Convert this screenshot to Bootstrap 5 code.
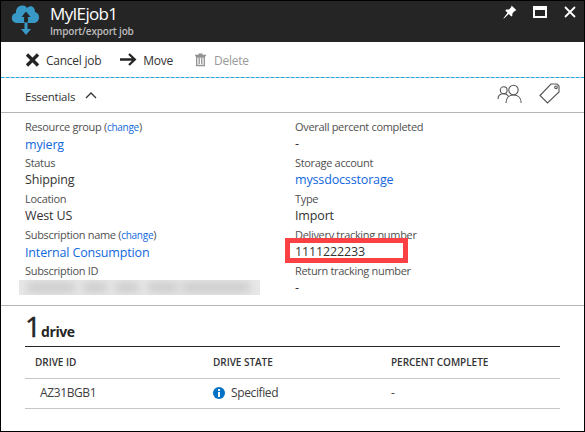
<!DOCTYPE html>
<html lang="en">
<head>
<meta charset="utf-8">
<meta name="viewport" content="width=device-width, initial-scale=1">
<title>MyIEjob1</title>
<link href="https://cdn.jsdelivr.net/npm/bootstrap@5.3.0/dist/css/bootstrap.min.css" rel="stylesheet">
<style>
body{font-family:"Open Sans","Noto Sans",sans-serif;color:#333;font-size:12px;line-height:18px;overflow:hidden}
svg{display:block;flex:none}
a{color:#1068dc;text-decoration:none}
.blade{height:432px;border:1px solid #000;background:#fff}
.blade-head{height:41px;background:#252525;color:#fff;padding:0 7px 0 10px}
.blade-name{padding-left:10px}
.blade-title{font-size:17px;line-height:22px;letter-spacing:-.65px;font-weight:400;margin-top:2px}
.blade-sub{font-size:10px;line-height:13px;color:#bdbdbd;font-weight:600;letter-spacing:-.18px}
.window-tools{padding-top:4px}
.maximize{margin-top:1px}
.commands{height:36px;padding-left:24px;border-bottom:1px dashed #0fb0e4;background:linear-gradient(#b9c0c3,#b9c0c3) left bottom/100% 1px no-repeat border-box}
.command{font-size:12px;letter-spacing:-.25px;color:#333;margin-left:6px;padding-top:2px}
.command.off{color:#999}
.gap-move{margin-left:19px}
.gap-delete{margin-left:22px}
.ess-bar{height:35px;padding:0 24px 0 24px;border-bottom:1px solid #b5b5b5}
.ess-bar .people,.ess-bar .tag{margin-bottom:3px}
.ess-title{font-size:11.5px;letter-spacing:-.25px;padding-top:3px}
.ess-body{height:193px;padding:5px 24px 0;border-bottom:1px solid #b5b5b5}
.ess-col{width:270px;flex:none}
.pair{height:36px}
.key{font-size:11px;line-height:17px;color:#505050;letter-spacing:-.32px}
.key .chg{font-size:10px;letter-spacing:-.27px}
.val{font-size:12.5px;line-height:17px;letter-spacing:-.15px}
.marker{left:-10px;top:-5px;width:123px;height:25px;border:5px solid #fc4144}
.redacted{margin:1px 0 0 -6px;width:241px;height:15px;background:#e8e8e8}
.redacted i{display:block;position:absolute;top:2px;height:11px;background:#cdcdcd;filter:blur(4px)}
.drives{padding:0 24px}
.drives-title{height:41px;border-bottom:1px solid #252525;color:#252525}
.count{font-size:28px;line-height:40px;letter-spacing:-3px;-webkit-text-stroke:.5px #252525}
.noun{font-size:14px;font-weight:700;letter-spacing:-.4px;margin-left:3px}
.grid-table{table-layout:fixed;width:535px}
.grid-table th,.grid-table td{padding:0 10px;border-bottom:1px solid #c6c6c6;box-shadow:none;vertical-align:middle}
.grid-table th{height:31px;line-height:16px;font-size:10px;font-weight:600;color:#333;letter-spacing:-.04px}
.grid-table td{height:30px;font-size:12px;color:#404040;letter-spacing:-.38px}
.grid-table td:first-child{padding-left:15px}
.state-name{margin-left:6px}
</style>
</head>
<body>
<main class="blade">
  <header class="blade-head d-flex">
    <svg width="29" height="36" viewBox="0 0 29 36"><path d="M7 22C3 22 .8 20 .8 17 .8 14 2.600 12.200 5 12 4.500 7 8 4 12 4.500 14 4.700 15 5.500 16 7 20 3.500 24 6 24 11 26.500 11.500 28 13.500 28 16.500 28 20 25.500 22 22 22Z" fill="#3999c6"/><path d="M15 10.500l4.500 5.500h-3v5h-3v-5h-3Z" fill="#252525"/><path d="M13 20.500v-4h4v4h-.5v7.500H20L15 34l-5-6h3.500v-7.500Z" fill="#252525"/><path d="M13.500 21.500h3V28h3.500l-5 6-5-6h3.500Z" fill="#3999c6"/></svg>
    <div class="blade-name flex-grow-1">
      <h1 class="blade-title mb-0">MyIEjob1</h1>
      <div class="blade-sub">Import/export job</div>
    </div>
    <div class="window-tools d-flex">
      <svg width="14" height="14" viewBox="0 0 14 14" fill="#fff"><path d="M8.500.5L13.500 5.200 12 5.700 9.500 8.200 9.300 10.800 8.300 11.500 5.800 9 1 13.500.3 13.500 4.500 7.800 2.300 5.500 3.300 4.600 6 4.500 8.300 2Z"/></svg>
      <svg class="maximize ms-3" width="14" height="12" viewBox="0 0 14 12"><path d="M1 1h12v10H1Z" fill="none" stroke="#fff" stroke-width="2"/><path d="M1 2h12" stroke="#fff" stroke-width="4"/></svg>
      <svg class="ms-3" width="14" height="14" viewBox="0 0 14 14"><path d="M2 2l10 10M12 2L2 12" stroke="#fff" stroke-width="1.800"/></svg>
    </div>
  </header>
  <nav class="commands d-flex align-items-center">
    <svg width="15" height="14" viewBox="0 0 15 14"><path d="M2 1.500l11 11M13 1.500l-11 11" stroke="#252525" stroke-width="3.300"/></svg>
    <span class="command">Cancel job</span>
    <svg class="gap-move" width="17" height="13" viewBox="0 0 17 13"><path d="M0 6.500h15M9 1l5.800 5.500L9 12" fill="none" stroke="#252525" stroke-width="2.300"/></svg>
    <span class="command">Move</span>
    <svg class="gap-delete" width="11" height="14" viewBox="0 0 11 14"><path d="M0 2.500h11M3.500 1.200h4M1.700 4v8.500h7.600V4ZM4.200 5v6M6.800 5v6" fill="none" stroke="#929292" stroke-width="1.300"/></svg>
    <span class="command off ms-2">Delete</span>
  </nav>
  <section>
    <div class="ess-bar d-flex align-items-center">
      <span class="ess-title">Essentials</span>
      <svg class="ms-2" width="16" height="7" viewBox="0 0 16 7"><path d="M3 6l5-5 5 5" fill="none" stroke="#333" stroke-width="1.300"/></svg>
      <svg class="people ms-auto" width="26" height="20" viewBox="0 0 26 20" fill="none" stroke="#555" stroke-width="1.100"><circle cx="16.500" cy="6" r="4.700"/><path d="M9 19c0-5 3-8 7.500-8s7.700 3 7.700 8"/><circle cx="6.700" cy="6.200" r="3.400"/><path d="M1 15c0-3 2-5.300 5.700-5.300 2 0 3.500.7 4.500 2.200"/></svg>
      <svg class="tag ms-3" width="21" height="21" viewBox="0 0 21 21" fill="none" stroke="#555" stroke-width="1.100"><path d="M1 12.500L12 1h6l2 2v6L8.500 20Z"/><circle cx="17" cy="4.300" r="1.300"/></svg>
    </div>
    <div class="ess-body d-flex">
      <div class="ess-col">
        <div class="pair"><div class="key">Resource group (<a class="chg" href="#">change</a>)</div><div class="val"><a href="#">myierg</a></div></div>
        <div class="pair"><div class="key">Status</div><div class="val">Shipping</div></div>
        <div class="pair"><div class="key">Location</div><div class="val">West US</div></div>
        <div class="pair"><div class="key">Subscription name (<a class="chg" href="#">change</a>)</div><div class="val"><a href="#">Internal Consumption</a></div></div>
        <div class="pair"><div class="key">Subscription ID</div><div class="redacted position-relative overflow-hidden"><i style="left:8px;width:48px"></i><i style="left:64px;width:24px"></i><i style="left:96px;width:24px"></i><i style="left:129px;width:30px"></i><i style="left:163px;width:68px"></i></div></div>
      </div>
      <div class="ess-col">
        <div class="pair"><div class="key">Overall percent completed</div><div class="val">-</div></div>
        <div class="pair"><div class="key">Storage account</div><div class="val"><a href="#">myssdocsstorage</a></div></div>
        <div class="pair"><div class="key">Type</div><div class="val">Import</div></div>
        <div class="pair"><div class="key">Delivery tracking number</div><div class="val position-relative">1111222233<span class="marker position-absolute"></span></div></div>
        <div class="pair"><div class="key">Return tracking number</div><div class="val">-</div></div>
      </div>
    </div>
  </section>
  <section class="drives">
    <div class="drives-title d-flex align-items-baseline"><span class="count">1</span><span class="noun">drive</span></div>
    <table class="grid-table table mb-0 align-middle">
      <colgroup><col width="178"><col width="178"><col></colgroup>
      <thead><tr><th>DRIVE ID</th><th>DRIVE STATE</th><th>PERCENT COMPLETE</th></tr></thead>
      <tbody><tr><td>AZ31BGB1</td><td><div class="d-flex align-items-center"><svg width="12" height="12" viewBox="0 0 12 12"><circle cx="6" cy="6" r="6" fill="#0072c6"/><path d="M6 2v2M6 5v5" stroke="#fff" stroke-width="2"/></svg><span class="state-name">Specified</span></div></td><td>-</td></tr></tbody>
    </table>
  </section>
</main>
<script src="https://cdn.jsdelivr.net/npm/bootstrap@5.3.0/dist/js/bootstrap.bundle.min.js"></script>
</body>
</html>
